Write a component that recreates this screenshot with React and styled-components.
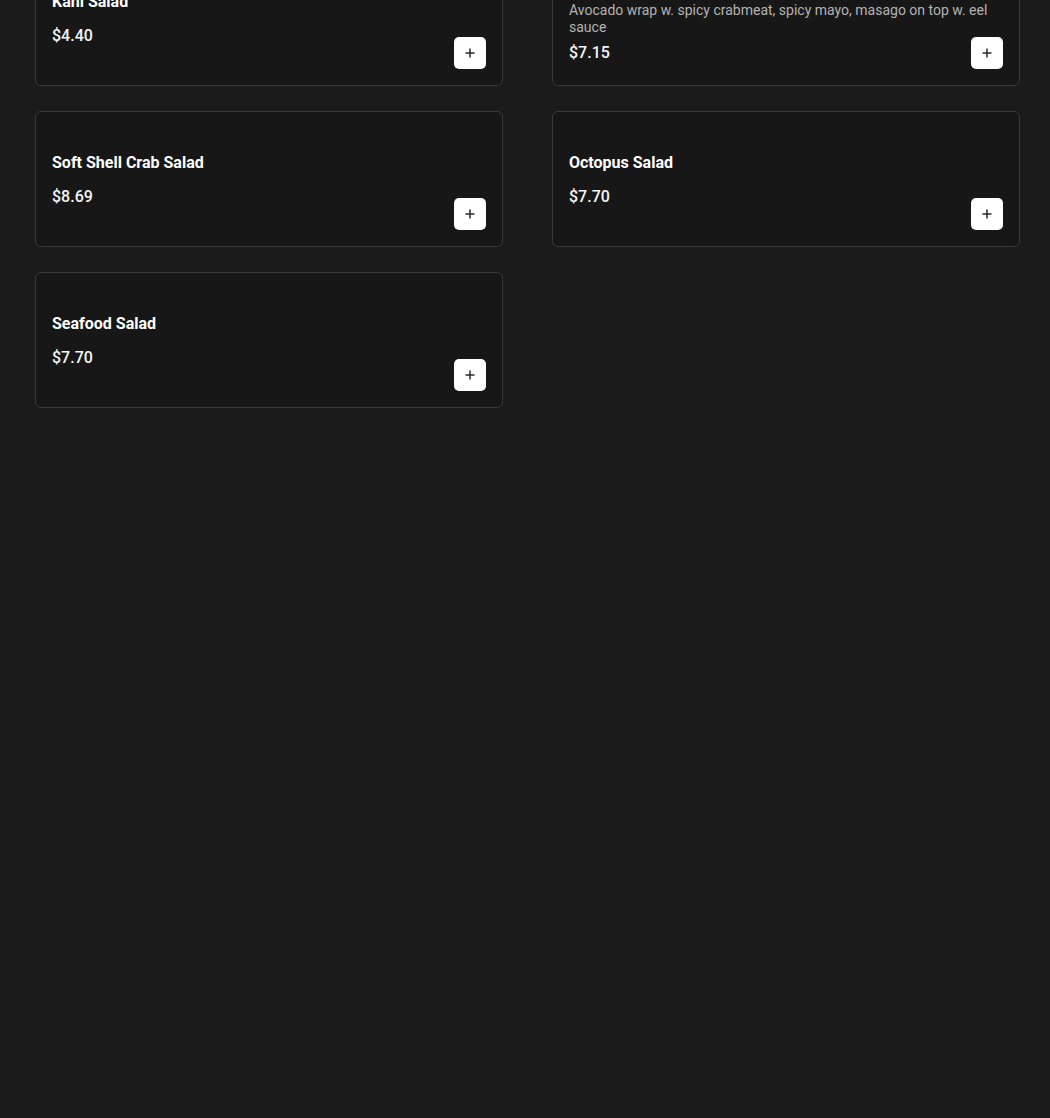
import React from 'react';
import styled, { createGlobalStyle } from 'styled-components';

// 페이지 기본 스타일
const GlobalStyle = createGlobalStyle`
    html, body {
        margin: 0;
        padding: 0;
        background: #1b1b1b;
        font-family: Roboto, 'Liberation Sans', sans-serif;
    }
`;

// 화면 전체
const Page = styled.div`
    min-height: 1118px;
    background: #1b1b1b;
    overflow: hidden;
`;

// 두 칸 메뉴 그리드 (스크롤된 상태라 위가 잘려 있음)
const MenuGrid = styled.div`
    display: grid;
    grid-template-columns: 468px 468px;
    column-gap: 49px;
    row-gap: 25px;
    margin-top: -50px;
    padding-left: 35px;
`;

// 메뉴 카드
const Card = styled.div`
    position: relative;
    box-sizing: border-box;
    min-height: 136px;
    display: flex;
    align-items: center;
    padding: 18px 16px 16px;
    background: #171717;
    border: 1px solid #3a3a3a;
    border-radius: 6px;
`;

const Info = styled.div`
    flex: 1;
    display: flex;
    flex-direction: column;
`;

const Title = styled.div`
    font-size: 16px;
    line-height: 24px;
    font-weight: 700;
    color: #ffffff;
`;

const Description = styled.div`
    margin-top: 4px;
    font-size: 14px;
    line-height: 17px;
    color: #b3b3b3;
`;

const Price = styled.div`
    margin-top: ${props => (props.$afterDesc ? '5px' : '10px')};
    font-size: 16px;
    line-height: 24px;
    font-weight: 500;
    color: #f5f5f5;
`;

// 담기 버튼 (카드 오른쪽 아래 모서리에 얹힘)
const AddButton = styled.button`
    position: absolute;
    right: 16px;
    bottom: 16px;
    width: 32px;
    height: 32px;
    padding: 0;
    display: flex;
    align-items: center;
    justify-content: center;
    background: #ffffff;
    border: none;
    border-radius: 5px;
    cursor: pointer;
`;

const PlusIcon = () => (
    <svg width="10" height="10" viewBox="0 0 10 10">
        <path d="M5 0.5v9M0.5 5h9" stroke="#2a2a2a" strokeWidth="1.5" fill="none" />
    </svg>
);

const items = [
    { name: 'Kani Salad', price: '$4.40' },
    {
        name: 'Spicy Crab Salad',
        desc: 'Avocado wrap w. spicy crabmeat, spicy mayo, masago on top w. eel sauce',
        price: '$7.15',
    },
    { name: 'Soft Shell Crab Salad', price: '$8.69' },
    { name: 'Octopus Salad', price: '$7.70' },
    { name: 'Seafood Salad', price: '$7.70' },
];

const MenuCard = ({ item }) => (
    <Card>
        <Info>
            <Title>{item.name}</Title>
            {item.desc && <Description>{item.desc}</Description>}
            <Price $afterDesc={!!item.desc}>{item.price}</Price>
        </Info>
        <AddButton aria-label="add">
            <PlusIcon />
        </AddButton>
    </Card>
);

const App = () => {
    return (
        <Page>
            <GlobalStyle />
            <MenuGrid>
                {items.map((item, i) => (
                    <MenuCard key={i} item={item} />
                ))}
            </MenuGrid>
        </Page>
    );
};

export default App;
